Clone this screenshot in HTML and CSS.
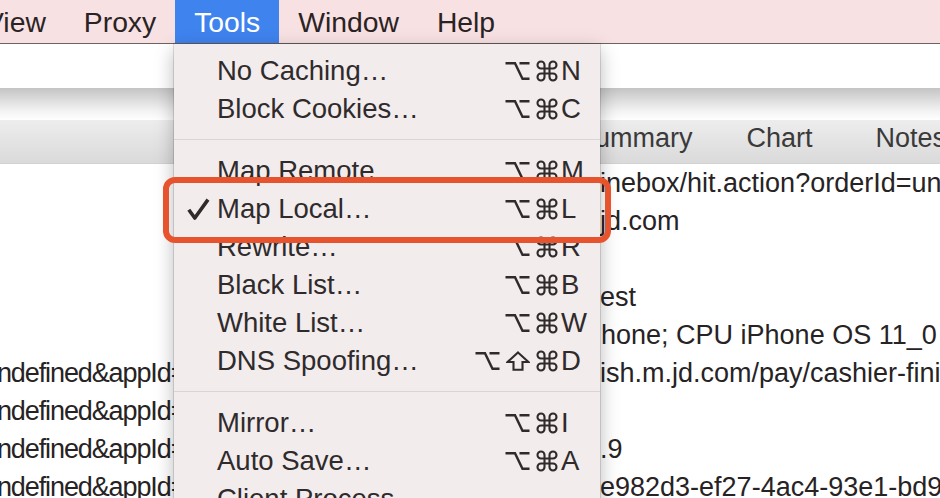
FILE: index.html
```html
<!DOCTYPE html>
<html>
<head>
  <title>Charles - Tools menu</title>
  <link rel="stylesheet" href="styles.css">
</head>
<body>
  <!-- key glyphs used in the shortcut column -->
  <svg class="defs" width="0" height="0">
    <symbol id="opt" viewBox="0 0 25 20">
      <path d="M0.5 2.2 H10 L17.5 17.8 H24.5 M14.5 2.2 H24.5" fill="none" stroke="currentColor" stroke-width="2.4"/>
    </symbol>
    <symbol id="cmd" viewBox="0 0 22 22">
      <path d="M8.5 5 V17 A3.5 3.5 0 1 1 5 13.5 H17 A3.5 3.5 0 1 1 13.5 17 V5 A3.5 3.5 0 1 1 17 8.5 H5 A3.5 3.5 0 1 1 8.5 5 Z" fill="none" stroke="currentColor" stroke-width="2.1"/>
    </symbol>
    <symbol id="shift" viewBox="0 0 24 20">
      <path d="M12 1.5 L22.5 11 H16.5 V18.8 H7.5 V11 H1.5 Z" fill="none" stroke="currentColor" stroke-width="2.1" stroke-linejoin="miter"/>
    </symbol>
  </svg>

  <div class="menubar">
    <span class="menu-title first">View</span>
    <span class="menu-title">Proxy</span>
    <span class="menu-title active">Tools</span>
    <span class="menu-title">Window</span>
    <span class="menu-title">Help</span>
  </div>

  <div class="window">
    <div class="toolbar"></div>
    <div class="toolbar-shadow"></div>
    <div class="tabs">
      <span class="tab">Summary</span>
      <span class="tab">Chart</span>
      <span class="tab notes">Notes</span>
    </div>
    <div class="rows">
      <div class="row"><span class="left"></span><span class="right">inebox/hit.action?orderId=undefined</span></div>
      <div class="row"><span class="left"></span><span class="right">jd.com</span></div>
      <div class="row"><span class="left"></span><span class="right"></span></div>
      <div class="row"><span class="left"></span><span class="right">est</span></div>
      <div class="row"><span class="left"></span><span class="right early">Phone; CPU iPhone OS 11_0 like Mac OS X</span></div>
      <div class="row"><span class="left">undefined&amp;appId=wx</span><span class="right">ish.m.jd.com/pay/cashier-finish.html</span></div>
      <div class="row"><span class="left">undefined&amp;appId=wx</span><span class="right"></span></div>
      <div class="row"><span class="left">undefined&amp;appId=wx</span><span class="right">.9</span></div>
      <div class="row"><span class="left">undefined&amp;appId=wx</span><span class="right">e982d3-ef27-4ac4-93e1-bd9f0c2a</span></div>
    </div>
  </div>

  <!-- Tools dropdown -->
  <div class="dropdown">
    <div class="item">
      <span class="check"></span><span class="label">No Caching…</span>
      <span class="mods"><svg class="k-opt"><use href="#opt"/></svg><svg class="k-cmd"><use href="#cmd"/></svg></span><span class="key">N</span>
    </div>
    <div class="item">
      <span class="check"></span><span class="label">Block Cookies…</span>
      <span class="mods"><svg class="k-opt"><use href="#opt"/></svg><svg class="k-cmd"><use href="#cmd"/></svg></span><span class="key">C</span>
    </div>
    <div class="sep"></div>
    <div class="item">
      <span class="check"></span><span class="label">Map Remote…</span>
      <span class="mods"><svg class="k-opt"><use href="#opt"/></svg><svg class="k-cmd"><use href="#cmd"/></svg></span><span class="key">M</span>
    </div>
    <div class="item">
      <span class="check">
        <svg width="23" height="22" viewBox="0 0 23 22"><polyline points="1.8,11.8 7.8,20 21,1.6" fill="none" stroke="currentColor" stroke-width="3.6" stroke-linejoin="round"/></svg>
      </span>
      <span class="label">Map Local…</span>
      <span class="mods"><svg class="k-opt"><use href="#opt"/></svg><svg class="k-cmd"><use href="#cmd"/></svg></span><span class="key">L</span>
    </div>
    <div class="item">
      <span class="check"></span><span class="label">Rewrite…</span>
      <span class="mods"><svg class="k-opt"><use href="#opt"/></svg><svg class="k-cmd"><use href="#cmd"/></svg></span><span class="key">R</span>
    </div>
    <div class="item">
      <span class="check"></span><span class="label">Black List…</span>
      <span class="mods"><svg class="k-opt"><use href="#opt"/></svg><svg class="k-cmd"><use href="#cmd"/></svg></span><span class="key">B</span>
    </div>
    <div class="item">
      <span class="check"></span><span class="label">White List…</span>
      <span class="mods"><svg class="k-opt"><use href="#opt"/></svg><svg class="k-cmd"><use href="#cmd"/></svg></span><span class="key">W</span>
    </div>
    <div class="item">
      <span class="check"></span><span class="label">DNS Spoofing…</span>
      <span class="mods"><svg class="k-opt"><use href="#opt"/></svg><svg class="k-shift"><use href="#shift"/></svg><svg class="k-cmd"><use href="#cmd"/></svg></span><span class="key">D</span>
    </div>
    <div class="sep"></div>
    <div class="item">
      <span class="check"></span><span class="label">Mirror…</span>
      <span class="mods"><svg class="k-opt"><use href="#opt"/></svg><svg class="k-cmd"><use href="#cmd"/></svg></span><span class="key">I</span>
    </div>
    <div class="item">
      <span class="check"></span><span class="label">Auto Save…</span>
      <span class="mods"><svg class="k-opt"><use href="#opt"/></svg><svg class="k-cmd"><use href="#cmd"/></svg></span><span class="key">A</span>
    </div>
    <div class="item">
      <span class="check"></span><span class="label">Client Process…</span>
    </div>
  </div>

  <div class="highlight"></div>
</body>
</html>
```

FILE: styles.css
```css
body {
  margin: 0;
  width: 940px;
  height: 498px;
  overflow: hidden;
  position: relative;
  font-family: "Liberation Sans", Arial, sans-serif;
  font-size: 27px;
  color: #272324;
  background: #fff;
}

.defs {
  position: absolute;
}

.menubar {
  display: flex;
  height: 43px;
  line-height: 44px;
  font-size: 28.3px;
  background: #f8e1e3;
  border-bottom: 1px solid #6d6364;
  color: #2a2324;
  white-space: nowrap;
}

.menu-title {
  padding: 0 19px;
}

.menu-title.first {
  margin-left: -34px;
}

.menu-title.active {
  background: #3f83ee;
  color: #fff;
}

.toolbar {
  height: 44px;
  background: #fff;
}

.toolbar-shadow {
  height: 32px;
  background: linear-gradient(#c4c4c4, #f2f2f2 70%, #fff);
}

.tabs {
  display: flex;
  height: 43px;
  line-height: 37px;
  padding-left: 577px;
  background: linear-gradient(#ededed, #dadada);
  border-bottom: 1px solid #d2d2d2;
  color: #3a3a3a;
  white-space: nowrap;
}

.tab {
  margin-right: 54px;
}

.tab.notes {
  margin-left: 9px;
}

.row {
  display: flex;
  height: 38px;
  line-height: 38px;
  white-space: nowrap;
}

.row .left {
  width: 174px;
  flex-shrink: 0;
  overflow: hidden;
  text-indent: -17px;
  letter-spacing: -1.1px;
}

.row .right {
  margin-left: 426px;
}

.row .early {
  margin-left: 409px;
}

.dropdown {
  position: absolute;
  left: 174px;
  top: 44px;
  width: 426px;
  height: 470px;
  padding-top: 8px;
  box-sizing: border-box;
  background: #f2ecec;
  color: #2f2a2b;
  font-size: 27.5px;
  box-shadow: 0 0 0 1px rgba(0, 0, 0, 0.12), 0 6px 18px rgba(0, 0, 0, 0.28);
}

.item {
  display: flex;
  align-items: center;
  height: 38px;
  line-height: 38px;
  padding: 0 9px 0 13px;
  white-space: nowrap;
}

.check {
  width: 30px;
  height: 22px;
}

.check svg {
  display: block;
}

.label {
  flex: 1;
}

.mods {
  display: flex;
  align-items: center;
  gap: 6px;
  margin-right: 3px;
}

.mods svg {
  display: block;
  height: 20px;
}

.k-opt {
  width: 25px;
}

.k-cmd {
  width: 22px;
  height: 22px !important;
}

.k-shift {
  width: 24px;
}

.key {
  width: 30px;
}

.sep {
  height: 1px;
  margin: 11px 0 12px;
  background: #dbd4d4;
}

.highlight {
  position: absolute;
  left: 163px;
  top: 177px;
  width: 448px;
  height: 66px;
  box-sizing: border-box;
  border: 6px solid #e7532d;
  border-radius: 12px;
}
```
